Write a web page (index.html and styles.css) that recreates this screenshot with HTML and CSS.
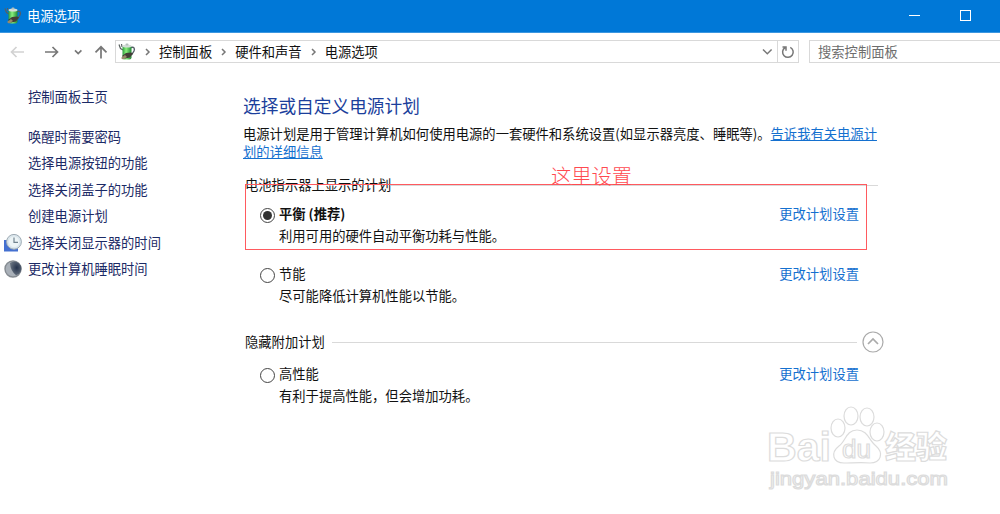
FILE: index.html
```html
<!DOCTYPE html>
<html lang="zh-CN">
<head>
  <meta charset="UTF-8">
  <title>电源选项</title>
  <link rel="stylesheet" href="styles.css">
</head>
<body>
  <svg width="0" height="0" class="defs">
    <defs>
      <linearGradient id="green" x1="0" x2="1">
        <stop offset="0" stop-color="#2c9c3c"/>
        <stop offset="0.4" stop-color="#8af07c"/>
        <stop offset="1" stop-color="#228a35"/>
      </linearGradient>
      <radialGradient id="moon" cx="0.6" cy="0.45" r="0.6">
        <stop offset="0" stop-color="#24324c"/>
        <stop offset="1" stop-color="#68727f"/>
      </radialGradient>
      <symbol id="battery" viewBox="0 0 18 18">
        <path d="M13 4.5c3-1 4 1 3 3.500l-2.500 4" fill="none" stroke="#555d68" stroke-width="1.400"/>
        <path d="M1 1.500l1.500 4 2.500 1.500M3.500 1l.5 3" fill="none" stroke="#59605f" stroke-width="1.200"/>
        <rect x="4.500" y="2.500" width="9" height="14" rx="2" fill="url(#green)"/>
        <ellipse cx="9" cy="3" rx="4.500" ry="1.600" fill="#d5ddd8"/>
        <rect x="7.500" y="0.600" width="3" height="2" rx="1" fill="#b4bfbb"/>
        <path d="M4 13l4-3 5-.5 2 1-3 4-5 1z" fill="#433e36"/>
        <path d="M3 15l4-3 2 2-4 2.500z" fill="#9a8a6c"/>
      </symbol>
    </defs>
  </svg>

  <div class="titlebar">
    <svg class="app-icon" width="18" height="18"><use href="#battery"/></svg>
    <span class="window-title">电源选项</span>
    <svg class="win-buttons" width="64" height="12" viewBox="0 0 64 12" fill="none" stroke="#fff">
      <path d="M0 5.500h11"/>
      <rect x="51.500" y="0.500" width="10" height="10"/>
    </svg>
  </div>

  <div class="toolbar">
    <svg class="nav" width="115" height="22" viewBox="0 0 115 22" fill="none" stroke-width="1.700">
      <path d="M24 12H11.500M16.500 7l-5 5 5 5" stroke="#d2d2d2"/>
      <path d="M45 12h12.500M52.500 7l5 5-5 5" stroke="#777"/>
      <path d="M75 10.300l3.200 3.200 3.200-3.200" stroke="#777"/>
      <path d="M101 18.500V7M95.500 12.300L101 6.800l5.500 5.500" stroke="#777"/>
    </svg>
    <div class="address">
      <svg class="address-icon" width="18" height="18"><use href="#battery"/></svg>
      <svg class="sep" width="6" height="8"><path d="M1 1l3 3-3 3"/></svg>
      <span>控制面板</span>
      <svg class="sep" width="6" height="8"><path d="M1 1l3 3-3 3"/></svg>
      <span>硬件和声音</span>
      <svg class="sep" width="6" height="8"><path d="M1 1l3 3-3 3"/></svg>
      <span>电源选项</span>
      <svg class="drop" width="11" height="8"><path d="M1 1.500l4.300 4.300 4.300-4.300"/></svg>
      <div class="refresh">
        <svg width="14" height="14" viewBox="0 0 14 14"><path d="M9.300 2.300A5.300 5.300 0 1 1 4 2.600M1.500 2H5v3.800"/></svg>
      </div>
    </div>
    <div class="search">搜索控制面板</div>
  </div>

  <div class="page">
    <div class="sidebar">
      <a class="home">控制面板主页</a>
      <a>唤醒时需要密码</a>
      <a>选择电源按钮的功能</a>
      <a>选择关闭盖子的功能</a>
      <a>创建电源计划</a>
      <a>
        <svg width="18" height="18" viewBox="0 0 18 18">
          <path d="M0 6h14v11.500H0z" fill="#4470d0"/>
          <circle cx="10" cy="7.800" r="7.400" fill="#dbe6ec" stroke="#9eabb4"/>
          <circle cx="10" cy="7.800" r="5.200" fill="#edf4f6"/>
          <path d="M10 3.500v4.800h4" fill="none" stroke="#71838f" stroke-width="1.200"/>
        </svg>
        选择关闭显示器的时间
      </a>
      <a>
        <svg width="18" height="18" viewBox="0 0 18 18">
          <circle cx="9" cy="9" r="8" fill="#a9b0b8" stroke="#858b91" stroke-width="1.400"/>
          <path d="M6 3a7 7 0 1 1 6 12.300A17 17 0 0 1 6 3z" fill="url(#moon)"/>
        </svg>
        更改计算机睡眠时间
      </a>
    </div>

    <div class="main">
      <h1>选择或自定义电源计划</h1>
      <p class="intro">电源计划是用于管理计算机如何使用电源的一套硬件和系统设置(如显示器亮度、睡眠等)。<a>告诉我有关电源计<br>划的详细信息</a></p>

      <div class="group-title first">电池指示器上显示的计划</div>
      <div class="plan">
        <span class="radio checked"></span>
        <div class="plan-text">
          <div class="name bold">平衡 (推荐)</div>
          <div>利用可用的硬件自动平衡功耗与性能。</div>
        </div>
        <a class="change">更改计划设置</a>
      </div>
      <div class="plan second">
        <span class="radio"></span>
        <div class="plan-text">
          <div class="name">节能</div>
          <div>尽可能降低计算机性能以节能。</div>
        </div>
        <a class="change">更改计划设置</a>
      </div>

      <div class="group-title extra">隐藏附加计划
        <svg width="22" height="22" viewBox="0 0 22 22" fill="none">
          <circle cx="11" cy="11" r="10" stroke="#aaa" stroke-width="1.200"/>
          <path d="M6 13l5-5 5 5" stroke="#aaa" stroke-width="1.700"/>
        </svg>
      </div>
      <div class="plan third">
        <span class="radio"></span>
        <div class="plan-text">
          <div class="name">高性能</div>
          <div>有利于提高性能，但会增加功耗。</div>
        </div>
        <a class="change">更改计划设置</a>
      </div>
    </div>
  </div>

  <div class="mark-box"></div>
  <div class="mark-text">这里设置</div>

  <svg class="watermark" width="190" height="92" viewBox="0 0 190 92">
    <g class="outline">
      <text x="4" y="61" font-size="40" font-weight="700" textLength="64" lengthAdjust="spacingAndGlyphs">Bai</text>
      <ellipse cx="22" cy="0" rx="7" ry="9" transform="translate(53 28)"/>
      <ellipse cx="88" cy="16" rx="7" ry="9"/>
      <ellipse cx="104" cy="17" rx="7" ry="9"/>
      <ellipse cx="114" cy="32" rx="7" ry="9"/>
      <path d="M94 30c-11 0-11 11-18 16-9 7-6 17 5 17 7 0 19-1 26 0 11 0 14-10 6-17-7-5-8-16-19-16z"/>
      <text x="79" y="58" font-size="25" textLength="29" lengthAdjust="spacingAndGlyphs" class="du">du</text>
      <text x="122" y="58" font-size="31" font-weight="900" class="cn">经验</text>
      <text x="7" y="85" font-size="19" textLength="178" lengthAdjust="spacingAndGlyphs">jingyan.baidu.com</text>
    </g>
  </svg>
</body>
</html>
```

FILE: styles.css
```css
* {
  box-sizing: border-box;
}
body {
  margin: 0;
  width: 1000px;
  height: 514px;
  overflow: hidden;
  position: relative;
  background: #fff;
  color: #111;
  font-family: "Noto Sans CJK SC", sans-serif;
  font-size: 13.3px;
  line-height: 20px;
}
svg {
  display: block;
  flex: none;
}
.defs {
  position: absolute;
}

/* title bar */
.titlebar {
  height: 33px;
  display: flex;
  align-items: center;
  padding: 0 27px 0 4px;
  background: #0078d7;
  border-bottom: 1px solid #3c97e0;
  color: #fff;
}
.window-title {
  margin-left: 5px;
}
.win-buttons {
  margin-left: auto;
}

/* address bar */
.toolbar {
  height: 29px;
  padding-top: 7px;
  display: flex;
}
.address {
  width: 684px;
  height: 23px;
  display: flex;
  align-items: center;
  border: 1px solid #d9d9d9;
  padding-left: 2px;
}
.sep, .drop, .refresh svg {
  fill: none;
  stroke: #777;
  stroke-width: 1.5;
}
.sep {
  margin: 0 8px 0 9px;
}
.address span + .sep {
  margin: 0 8px 0 9px;
}
.drop {
  margin-left: auto;
  margin-right: 4px;
}
.refresh {
  width: 21px;
  height: 21px;
  padding: 4px 3px;
  border-left: 1px solid #d9d9d9;
}
.search {
  flex: 1;
  height: 23px;
  margin-left: 10px;
  padding: 1px 0 0 8px;
  border: 1px solid #d9d9d9;
  border-right: 0;
  color: #6d6d6d;
}

.page {
  display: flex;
}
.sidebar {
  width: 243px;
  padding: 22px 0 0 4px;
  color: #1b2a66;
}
.sidebar a {
  display: flex;
  align-items: center;
  height: 26.5px;
  padding-left: 24px;
}
.sidebar .home {
  margin-bottom: 13px;
}
.sidebar svg {
  margin-left: -24px;
  margin-right: 6px;
}

.main {
  width: 645px;
  padding-top: 28px;
}
h1 {
  margin: 0;
  font-size: 17.7px;
  line-height: 30px;
  font-weight: 400;
  color: #1c3f9c;
}
.intro {
  margin: 5px 0 0;
  line-height: 18px;
  white-space: nowrap;
}
.intro a, .change {
  color: #1470cf;
}
.intro a {
  text-decoration: underline;
}
.group-title {
  display: flex;
  align-items: center;
  height: 22px;
  padding-left: 2px;
}
.group-title.first {
  margin-top: 13px;
}
.group-title::after {
  content: "";
  flex: 1;
  height: 1px;
  margin-right: 10px;
  background: #d9d9d9;
}
.group-title.extra {
  margin-top: 24px;
  width: 641px;
}
.group-title.extra::after {
  order: 1;
  margin: 0 5px 0 7px;
}
.group-title.extra svg {
  order: 2;
}
.plan {
  display: flex;
  height: 44px;
  width: 616px;
  padding-left: 17px;
  margin-top: 7px;
  line-height: 22px;
}
.plan.second {
  margin-top: 16px;
}
.plan.third {
  margin-top: 10px;
}
.radio {
  width: 15px;
  height: 15px;
  margin: 5px 4px 0 0;
  border: 1px solid #444;
  border-radius: 50%;
}
.radio.checked {
  background: #333;
  background-clip: content-box;
  padding: 2px;
}
.bold {
  font-weight: 700;
}
.change {
  margin-left: auto;
}

/* red annotation over the first plan */
.mark-box {
  position: absolute;
  left: 245px;
  top: 184px;
  width: 622px;
  height: 66px;
  border: 1px solid #ff5a5f;
}
.mark-text {
  position: absolute;
  left: 551px;
  top: 160px;
  color: #ff4a50;
  font-size: 20.3px;
  font-weight: 300;
  line-height: 30px;
}

.watermark {
  position: absolute;
  left: 763px;
  top: 400px;
}
.outline {
  fill: #fff;
  stroke: #dcdcdc;
  stroke-width: 1.2;
  font-family: "Liberation Sans", sans-serif;
}
.outline .cn {
  font-family: "Noto Sans CJK SC", sans-serif;
}
```
